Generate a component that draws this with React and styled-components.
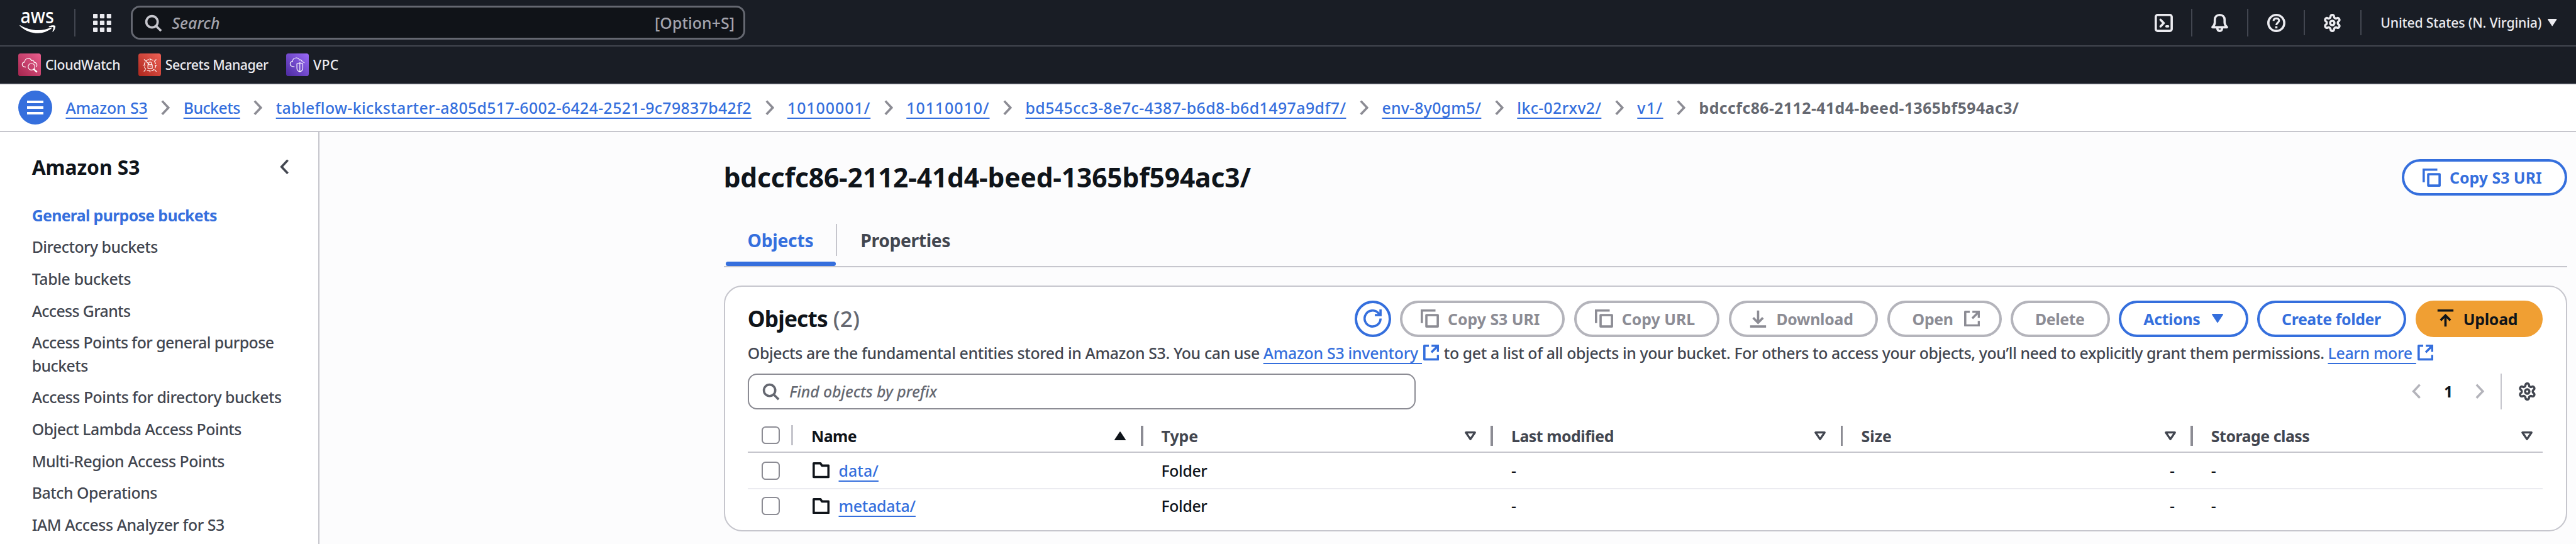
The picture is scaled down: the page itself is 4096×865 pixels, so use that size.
import React from "react";
import styled, { createGlobalStyle, css } from "styled-components";

const SCALE = 4096 / 4528;
const u = (n) => `${+(n * SCALE).toFixed(3)}px`;

const c = {
  blue: "#356fdd",
  ink: "#0f141a",
  text: "#424650",
  muted: "#656871",
  grey: "#8c8c94",
  border: "#c6c6cd",
  light: "#ebebf0",
  disabled: "#b4b4bb",
  navy: "#191d25",
  navyText: "#ebebf0",
};

const Global = createGlobalStyle`
  html, body { margin: 0; padding: 0; }
  *, *::before, *::after { box-sizing: border-box; }
  body {
    font-family: "Noto Sans", "Open Sans", sans-serif;
    font-weight: 500;
    color: ${c.text};
    overflow: hidden;
    -webkit-font-smoothing: antialiased;
  }
`;

/* ---------- shared text ---------- */

const tracked = css`
  letter-spacing: ${(p) => u(p.$ls || 0)};
  white-space: nowrap;
`;

const Text = styled.span`
  font-size: ${u(27.5)};
  line-height: ${u(40)};
  ${tracked}
`;

const Link = styled.a`
  font-size: ${u(27.5)};
  line-height: ${u(40)};
  color: ${c.blue};
  text-decoration: underline;
  text-decoration-thickness: 2px;
  text-underline-offset: ${u(6.5)};
  text-decoration-skip-ink: none;
  ${tracked}
`;

/* ---------- icons ---------- */

const Svg = styled.svg`
  display: block;
  flex: none;
  width: ${(p) => u(p.$w || 32)};
  height: ${(p) => u(p.$h || p.$w || 32)};
  fill: none;
  stroke: currentColor;
  stroke-width: ${(p) => p.$sw || 2};
  color: ${(p) => p.$color || "inherit"};
`;

const SearchIcon = ({ color }) => (
  <Svg viewBox="0 0 16 16" $color={color}>
    <circle cx="7" cy="7" r="5" />
    <path d="M10.6 10.6 15 15" />
  </Svg>
);
const CopyIcon = () => (
  <Svg viewBox="0 0 16 16">
    <path d="M1 12V1H13" />
    <path d="M5 5h10v10H5z" strokeLinejoin="round" />
  </Svg>
);
const RefreshIcon = () => (
  <Svg viewBox="0 0 16 16">
    <path d="M15 8a7 7 0 1 1-1.9-4.8L14.6 5" />
    <path d="M15 0v5H10" />
  </Svg>
);
const ExternalIcon = () => (
  <Svg viewBox="0 0 14 14" $w={28}>
    <path d="M5 1H1v12h12V9" strokeLinejoin="round" />
    <path d="M7.3 1H13v5.4M12.6 1.4 7.2 6.8" />
  </Svg>
);
const DownloadIcon = () => (
  <Svg viewBox="0 0 16 16">
    <path d="M8 1v10.6M3.7 7.4 8 11.7l4.3-4.3M1 15h14" />
  </Svg>
);
const UploadIcon = () => (
  <Svg viewBox="0 0 16 16">
    <path d="M1 1h14M8 15V5M3.7 9.6 8 5.3l4.3 4.3" />
  </Svg>
);
const Chevron = ({ left, color }) => (
  <Svg viewBox="0 0 16 27" $w={16} $h={27} $sw={4} $color={color}>
    <path d={left ? "M14 1.8 3 13.5 14 25.2" : "M2 1.8 13 13.5 2 25.2"} />
  </Svg>
);
const GearIcon = ({ color }) => (
  <Svg viewBox="0.6 0.6 22.8 22.8" $sw={2.75} $color={color} strokeLinejoin="round">
    <path d="M12.22 2h-.44a2 2 0 0 0-2 2v.18a2 2 0 0 1-1 1.73l-.43.25a2 2 0 0 1-2 0l-.15-.08a2 2 0 0 0-2.73.73l-.22.38a2 2 0 0 0 .73 2.73l.15.1a2 2 0 0 1 1 1.72v.51a2 2 0 0 1-1 1.74l-.15.09a2 2 0 0 0-.73 2.73l.22.38a2 2 0 0 0 2.73.73l.15-.08a2 2 0 0 1 2 0l.43.25a2 2 0 0 1 1 1.73V20a2 2 0 0 0 2 2h.44a2 2 0 0 0 2-2v-.18a2 2 0 0 1 1-1.73l.43-.25a2 2 0 0 1 2 0l.15.08a2 2 0 0 0 2.73-.73l.22-.39a2 2 0 0 0-.73-2.73l-.15-.08a2 2 0 0 1-1-1.74v-.5a2 2 0 0 1 1-1.74l.15-.09a2 2 0 0 0 .73-2.73l-.22-.38a2 2 0 0 0-2.73-.73l-.15.08a2 2 0 0 1-2 0l-.43-.25a2 2 0 0 1-1-1.73V4a2 2 0 0 0-2-2z" />
    <circle cx="12" cy="12" r="2.7" />
  </Svg>
);
const TerminalIcon = () => (
  <Svg viewBox="0 0 16 16" strokeLinecap="round" strokeLinejoin="round">
    <rect x="1" y="1" width="14" height="14" rx="1.6" />
    <path d="m5.2 5.2 2.8 2.9-2.8 2.9M10.3 11h1.6" />
  </Svg>
);
const BellIcon = () => (
  <Svg viewBox="0 0 16 16" strokeLinejoin="round">
    <path d="M1.6 11.8C3 10.4 3.7 9.4 3.7 7.4V5.2C3.7 2.6 5.5 1 8 1s4.3 1.6 4.3 4.2v2.2c0 2 .7 3 2.1 4.4z" />
    <path d="M5.9 12.6c0 1.6.8 2.4 2.1 2.4s2.1-.8 2.1-2.4" />
  </Svg>
);
const HelpIcon = () => (
  <Svg viewBox="0 0 16 16">
    <circle cx="8" cy="8" r="7" />
    <path d="M5.6 6.2C5.6 4.7 6.6 4 8 4s2.4.8 2.4 2.1C10.4 7.7 8 7.8 8 10" strokeWidth="1.7" />
    <path d="M7 11h2v1.8H7z" fill="currentColor" stroke="none" />
  </Svg>
);
const FolderIcon = () => (
  <Svg viewBox="0 0 30 28" $w={30} $h={28} $sw={4} $color={c.ink} strokeLinejoin="round">
    <path d="M2 2h12l2.6 4H28v20H2z" />
  </Svg>
);
const GridIcon = () => (
  <Svg viewBox="0 0 32 32">
    {[0, 12, 24].map((y) =>
      [0, 12, 24].map((x) => (
        <rect key={`${x}-${y}`} x={x} y={y} width="8" height="8" rx="1.2" fill="currentColor" stroke="none" />
      ))
    )}
  </Svg>
);
const Triangle = ({ up, hollow, w = 20, h = 16, color }) => (
  <Svg viewBox="0 0 20 16" $w={w} $h={h} $sw={hollow ? 3.6 : 2} $color={color} strokeLinejoin="round">
    {hollow ? (
      <path d="M2 1.9h16L10 13.6z" />
    ) : (
      <path fill="currentColor" d={up ? "M10 1.4 18.9 15H1.1z" : "M10 14.6 18.9 1H1.1z"} />
    )}
  </Svg>
);

const Logo = () => (
  <Svg viewBox="0 -20 64 80" $w={64} $h={80}>
    <text x="1.6" y="20.4" textLength="59" lengthAdjust="spacingAndGlyphs" fill="#fff" stroke="none" fontSize="36.5" fontWeight="500">
      aws
    </text>
    <path
      fill="#fff"
      stroke="none"
      d="M.4 25.2c-.4-.7.3-1.2 1-.8C10.500 29.800 21.500 33 32.500 33c8 0 16-1.600 22.600-4.700 1.300-.6 2.400.8 1.100 1.800C49.800 35.200 41.200 38.300 33 38.300 20.500 38.300 8.800 33.700.4 25.200z"
    />
    <path
      fill="#fff"
      stroke="none"
      d="M51.800 26.300c3.600-2.500 9.600-2.100 11-1.100 1 1-.2 7.300-3.800 10.400-.8.700-1.500.3-1.100-.6 1-2.400 2.300-6 1.600-6.900-.8-.9-4.600-.6-7-.3-.9.100-1.400-.8-.7-1.500z"
    />
  </Svg>
);

const cloud =
  "M13.4 24C8.500 24 7 21.600 7 19.200c0-2.200 1.600-3.800 4.400-4.200C11.400 11 14.300 8.700 18 8.700c2.500 0 4.400 1.500 5.300 4 2.200-1.200 4.600.1 4.700 3 3.200.5 4.900 2.300 4.900 4.700 0 1.500-.5 2.600-1.400 3.400";

const CloudWatchGlyph = () => (
  <>
    <path d={cloud} />
    <circle cx="23.300" cy="23.300" r="5.900" />
    <path d="m27.400 27.800 4.800 4.200" strokeWidth="2.800" strokeLinecap="round" />
  </>
);
const SecretsGlyph = () => (
  <>
    <circle cx="20.500" cy="20.700" r="10.200" strokeDasharray="5.600 2.400" />
    <path d="M20.500 8v4.500M20.500 29v4M8 20.700h4.500M28.700 20.700h4.300M10 10.400l7.500 7.300M31.500 10.500l-3.200 3.200M12.800 28.400l-3.200 3.200M28.300 28.400l3.500 3.600" />
    <path d="M16.800 19.800h7.600v6.600h-7.600zM18.300 19.600v-2.200c0-3 4.600-3 4.600 0v2.200M20.600 22v2.300" />
  </>
);
const VpcGlyph = () => (
  <>
    <path d="M14.700 23.400C8.500 23.500 7 20.600 7 18.200c0-2.200 1.600-3.800 4.400-4.200C11.400 10 14.300 7.700 18 7.700c2.500 0 4.400 1.500 5.300 4 2.200-1.200 4.600.1 4.700 3 1.900.3 3.300 1 4.100 2.100" />
    <path d="M24.100 16.500 29.300 18v8c0 3.400-2 5.200-5.200 6.400-3.200-1.200-5.200-3-5.200-6.400v-8zM24.100 17v15" />
  </>
);

/* ---------- page frame ---------- */

const Page = styled.div`
  display: flex;
  flex-direction: column;
  width: 4096px;
  height: 865px;
  overflow: hidden;
  background: #fcfcfd;
`;

const TopBar = styled.header`
  flex: none;
  display: flex;
  align-items: center;
  height: ${u(82)};
  padding: 0 ${u(31)} 0 ${u(34)};
  background: ${c.navy};
  border-bottom: 2px solid ${c.text};
  color: ${c.navyText};
`;

const BarDivider = styled.i`
  flex: none;
  width: 2px;
  height: ${(p) => u(p.$h || 48)};
  background: ${c.text};
`;

const AppsButton = styled.div`
  padding: 0 ${u(34)} 0 ${u(31.5)};
`;

const LogoSlot = styled.div`
  width: ${u(96)};
`;

const GlobalSearch = styled.div`
  display: flex;
  align-items: center;
  width: ${u(1080)};
  height: ${u(60)};
  padding: 0 ${u(15)} 0 ${u(20)};
  border: ${u(4)} solid ${c.muted};
  border-radius: ${u(16)};
  background: #101318;
`;

const Placeholder = styled(Text)`
  flex: 1;
  font-style: italic;
  color: ${(p) => p.$color};
  padding-left: ${u(17)};
`;

const Shortcut = styled(Text)`
  color: #a4a4ad;
`;

const Spacer = styled.div`
  flex: 1;
`;

const TopAction = styled.div`
  display: flex;
  justify-content: center;
  width: ${u(96.8)};
`;

const Region = styled.div`
  display: flex;
  align-items: center;
  gap: ${u(11)};
  width: ${u(346.5)};
  padding-left: ${u(34)};
`;

const SmallText = styled(Text)`
  font-size: ${u(23.5)};
`;

const Favorites = styled.nav`
  flex: none;
  display: flex;
  align-items: center;
  height: ${u(66)};
  padding-left: ${u(32)};
  gap: ${u(31.5)};
  background: ${c.navy};
  border-bottom: 2px solid ${c.text};
  color: ${c.navyText};
`;

const Favorite = styled.div`
  display: flex;
  align-items: center;
  gap: ${u(7.5)};
`;

const ServiceTile = styled.div`
  width: ${u(40)};
  height: ${u(40)};
  border-radius: ${u(4)};
  background: linear-gradient(45deg, ${(p) => p.$from}, ${(p) => p.$to});
  color: #fff;
`;

const Crumbs = styled.nav`
  flex: none;
  display: flex;
  align-items: center;
  height: ${u(84)};
  padding-left: ${u(32)};
  background: #fff;
  border-bottom: 2px solid ${c.border};
`;

const MenuButton = styled.div`
  display: flex;
  flex-direction: column;
  align-items: center;
  justify-content: center;
  gap: ${u(6)};
  width: ${u(60)};
  height: ${u(60)};
  margin-right: ${u(23.5)};
  border-radius: 50%;
  background: ${c.blue};
`;

const MenuLine = styled.i`
  width: ${u(28)};
  height: ${u(4)};
  background: #fff;
`;

const CrumbGap = styled.div`
  display: flex;
  width: ${u(63)};
  padding-left: ${u(24)};
`;

const CurrentCrumb = styled(Text)`
  font-weight: 700;
  color: ${c.muted};
`;

const Body = styled.div`
  flex: 1;
  display: flex;
  min-height: 0;
`;

/* ---------- side navigation ---------- */

const Side = styled.aside`
  flex: none;
  width: ${u(562)};
  padding: ${u(31)} ${u(51.5)} 0 ${u(56)};
  background: #fff;
  border-right: 2px solid ${c.border};
`;

const SideHead = styled.div`
  display: flex;
  align-items: center;
  justify-content: space-between;
  height: ${u(60)};
  margin-bottom: ${u(35)};
`;

const SideTitle = styled.h2`
  margin: 0;
  padding-top: ${u(2)};
  font-size: ${u(35.2)};
  line-height: ${u(44)};
  font-weight: 700;
  color: ${c.ink};
  ${tracked}
`;

const SideList = styled.ul`
  display: flex;
  flex-direction: column;
  gap: ${u(16)};
  margin: 0;
  padding: 0;
  list-style: none;
`;

const SideItem = styled.li`
  width: ${u(450)};
  font-size: ${u(27.5)};
  line-height: ${u(40)};
  letter-spacing: ${(p) => u(p.$ls || 0)};
  font-weight: ${(p) => (p.$active ? 700 : 500)};
  color: ${(p) => (p.$active ? c.blue : c.text)};
`;

/* ---------- main ---------- */

const Main = styled.main`
  flex: 1;
  padding: ${u(48)} ${u(16)} 0 ${u(710)};
`;

const TitleRow = styled.div`
  display: flex;
  align-items: center;
  justify-content: space-between;
  height: ${u(64)};
`;

const Title = styled.h1`
  margin: 0;
  font-size: ${u(47)};
  line-height: ${u(64)};
  font-weight: 700;
  color: ${c.ink};
  ${tracked}
`;

const tones = {
  normal: css`
    color: ${c.blue};
    border-color: ${c.blue};
  `,
  disabled: css`
    color: ${c.grey};
    border-color: ${c.disabled};
  `,
  primary: css`
    color: ${c.ink};
    border-color: #f09f33;
    background: #f09f33;
  `,
};

const Button = styled.button`
  display: flex;
  align-items: center;
  flex: none;
  gap: ${(p) => u(p.$gap ?? 15.5)};
  width: ${(p) => u(p.$w)};
  height: ${u(64)};
  padding: 0 0 0 ${(p) => u(p.$pad ?? 38.5)};
  border: 4px solid;
  border-radius: ${u(40)};
  background: #fff;
  font-family: inherit;
  font-size: ${u(27.5)};
  font-weight: 700;
  ${tracked}
  ${(p) => tones[p.$tone || "normal"]}
`;

const TabList = styled.div`
  display: flex;
  align-items: flex-start;
  height: ${u(94)};
  margin-top: ${u(32)};
  padding-left: ${u(4)};
  border-bottom: 2px solid ${c.border};
`;

const Tab = styled.div`
  display: flex;
  flex-direction: column;
  width: ${(p) => u(p.$w)};
  height: ${u(92)};
  color: ${(p) => (p.$active ? c.blue : c.text)};
`;

const TabLabel = styled.span`
  display: flex;
  align-items: center;
  flex: 1;
  padding: ${u(8)} 0 0 ${(p) => u(p.$pad)};
  font-size: ${u(31.3)};
  font-weight: 700;
  ${tracked}
`;

const TabBar = styled.i`
  height: ${u(8)};
  border-radius: ${u(4)};
  background: ${(p) => (p.$active ? c.blue : "transparent")};
`;

const TabDivider = styled.i`
  width: 2px;
  height: ${u(56)};
  margin-top: ${u(18)};
  background: ${c.border};
`;

const Card = styled.section`
  height: ${u(432)};
  margin-top: ${u(32)};
  padding: ${u(24)} ${u(40)} 0;
  border: 2px solid ${c.border};
  border-radius: ${u(32)};
  background: #fff;
`;

const CardHead = styled.div`
  display: flex;
  align-items: center;
  justify-content: space-between;
  height: ${u(64)};
`;

const CardTitle = styled.h2`
  display: flex;
  gap: ${u(10)};
  margin: 0;
  font-size: ${u(39)};
  line-height: ${u(48)};
  font-weight: 700;
  color: ${c.ink};
  ${tracked}
`;

const Counter = styled.span`
  font-weight: 500;
  color: ${c.muted};
  letter-spacing: 0;
`;

const ButtonRow = styled.div`
  display: flex;
  gap: ${u(16)};
`;

const Description = styled.p`
  display: flex;
  align-items: center;
  height: ${u(40)};
  margin: ${u(8)} 0 0;
`;

const InlineIcon = styled.span`
  display: flex;
  padding: 0 ${(p) => u(p.$after || 0)} 0 ${u(2)};
  color: ${c.blue};
`;

const WordGap = styled.i`
  width: ${u(6.5)};
`;

const Tools = styled.div`
  display: flex;
  align-items: center;
  height: ${u(64)};
  margin-top: ${u(16)};
`;

const Filter = styled.div`
  display: flex;
  align-items: center;
  width: ${u(1174)};
  height: ${u(64)};
  padding-left: ${u(22)};
  border: 2px solid ${c.grey};
  border-radius: ${u(16)};
`;

const Pager = styled.div`
  display: flex;
  align-items: center;
  justify-content: space-between;
  width: ${u(128)};
  margin-right: ${u(28)};
`;

const PageNumber = styled(Text)`
  font-weight: 700;
  color: ${c.ink};
`;

const ToolDivider = styled.i`
  width: 2px;
  height: ${u(64)};
  margin-right: ${u(28)};
  background: ${c.border};
`;

const GearSlot = styled.div`
  width: ${u(44)};
`;

/* ---------- table ---------- */

const Table = styled.div`
  display: flex;
  flex-direction: column;
  margin-top: ${u(16)};
`;

const Row = styled.div`
  display: grid;
  grid-template-columns: ${u(80)} repeat(5, 1fr);
  align-items: center;
  height: ${(p) => u(p.$h)};
  border-bottom: ${(p) => (p.$line ? `2px solid ${p.$line}` : "none")};
`;

const SelectCell = styled.div`
  display: flex;
  align-items: center;
  justify-content: space-between;
  padding-left: ${u(25)};
`;

const Checkbox = styled.i`
  width: ${u(32)};
  height: ${u(32)};
  border: 2px solid ${c.grey};
  border-radius: ${u(7)};
  background: #fff;
`;

const Resizer = styled.i`
  width: ${u(4)};
  height: ${u(36)};
  background: ${(p) => p.$color || c.grey};
`;

const HeadCell = styled.div`
  display: flex;
  align-items: center;
  padding: ${u(2)} 0 0 ${u(32)};
  color: ${(p) => (p.$sorted ? c.ink : c.text)};
`;

const HeadLabel = styled(Text)`
  flex: 1;
  font-weight: 700;
`;

const SortSlot = styled.div`
  display: flex;
  padding-right: ${(p) => u(p.$last ? 18 : 26)};
`;

const Cell = styled.div`
  display: flex;
  align-items: center;
  justify-content: ${(p) => (p.$end ? "flex-end" : "flex-start")};
  padding: 0 ${u(32)};
  color: ${c.ink};
`;

const NameCell = styled(Cell)`
  gap: ${u(16)};
  padding-left: ${u(34)};
`;

/* ---------- data ---------- */

const favorites = [
  { name: "CloudWatch", ls: -0.33, from: "#a5254e", to: "#ea5e8d", Glyph: CloudWatchGlyph },
  { name: "Secrets Manager", ls: -0.5, from: "#ad271d", to: "#ee6156", Glyph: SecretsGlyph },
  { name: "VPC", ls: 0.5, from: "#4b2a9f", to: "#9a6af8", Glyph: VpcGlyph },
];

const crumbs = [
  { name: "Amazon S3", ls: -0.1 },
  { name: "Buckets", ls: -0.6 },
  { name: "tableflow-kickstarter-a805d517-6002-6424-2521-9c79837b42f2", ls: 0.39 },
  { name: "10100001/", ls: 1.1 },
  { name: "10110010/", ls: 1.1 },
  { name: "bd545cc3-8e7c-4387-b6d8-b6d1497a9df7/", ls: 0.49 },
  { name: "env-8y0gm5/", ls: 0.27 },
  { name: "lkc-02rxv2/", ls: 0.39 },
  { name: "v1/", ls: 1.6 },
];

const sideItems = [
  { name: "General purpose buckets", ls: -0.73, active: true },
  { name: "Directory buckets", ls: -0.58 },
  { name: "Table buckets", ls: -0.38 },
  { name: "Access Grants", ls: -0.71 },
  { name: "Access Points for general purpose buckets", ls: -0.6 },
  { name: "Access Points for directory buckets", ls: -0.53 },
  { name: "Object Lambda Access Points", ls: -0.54 },
  { name: "Multi-Region Access Points", ls: -0.52 },
  { name: "Batch Operations", ls: -0.52 },
  { name: "IAM Access Analyzer for S3", ls: -0.5 },
];

const columns = [
  { name: "Name", ls: -0.6, sorted: true },
  { name: "Type", ls: 0 },
  { name: "Last modified", ls: -0.52 },
  { name: "Size", ls: 0.05 },
  { name: "Storage class", ls: -0.52 },
];

const rows = [
  { name: "data/", ls: 0.1, h: 64, line: c.light },
  { name: "metadata/", ls: -0.26, h: 58 },
];

export default function App() {
  return (
    <Page>
      <Global />
      <TopBar>
        <LogoSlot>
          <Logo />
        </LogoSlot>
        <BarDivider />
        <AppsButton>
          <GridIcon />
        </AppsButton>
        <GlobalSearch>
          <SearchIcon color="#c6c6cd" />
          <Placeholder $ls={0.2} $color="#a4a4ad">Search</Placeholder>
          <Shortcut $ls={0.1}>[Option+S]</Shortcut>
        </GlobalSearch>
        <Spacer />
        <TopAction><TerminalIcon /></TopAction>
        <BarDivider />
        <TopAction><BellIcon /></TopAction>
        <BarDivider />
        <TopAction><HelpIcon /></TopAction>
        <BarDivider $h={44} />
        <TopAction><GearIcon /></TopAction>
        <BarDivider $h={44} />
        <Region>
          <SmallText $ls={-0.2}>United States (N. Virginia)</SmallText>
          <Triangle w={16} h={13} />
        </Region>
      </TopBar>

      <Favorites>
        {favorites.map(({ name, ls, from, to, Glyph }) => (
          <Favorite key={name}>
            <ServiceTile $from={from} $to={to}>
              <Svg viewBox="0 0 40 40" $w={40} $sw={1.3} strokeLinejoin="round">
                <Glyph />
              </Svg>
            </ServiceTile>
            <SmallText $ls={ls}>{name}</SmallText>
          </Favorite>
        ))}
      </Favorites>

      <Crumbs>
        <MenuButton>
          <MenuLine />
          <MenuLine />
          <MenuLine />
        </MenuButton>
        {crumbs.map(({ name, ls }) => (
          <React.Fragment key={name}>
            <Link $ls={ls}>{name}</Link>
            <CrumbGap>
              <Chevron color={c.grey} />
            </CrumbGap>
          </React.Fragment>
        ))}
        <CurrentCrumb $ls={0.47}>bdccfc86-2112-41d4-beed-1365bf594ac3/</CurrentCrumb>
      </Crumbs>

      <Body>
        <Side>
          <SideHead>
            <SideTitle $ls={-0.1}>Amazon S3</SideTitle>
            <Chevron left color={c.text} />
          </SideHead>
          <SideList>
            {sideItems.map(({ name, ls, active }) => (
              <SideItem key={name} $ls={ls} $active={active}>{name}</SideItem>
            ))}
          </SideList>
        </Side>

        <Main>
          <TitleRow>
            <Title $ls={-0.15}>bdccfc86-2112-41d4-beed-1365bf594ac3/</Title>
            <Button $w={290} $pad={32} $ls={0}>
              <CopyIcon />
              Copy S3 URI
            </Button>
          </TitleRow>

          <TabList>
            <Tab $w={193} $active>
              <TabLabel $pad={38} $ls={-0.3}>Objects</TabLabel>
              <TabBar $active />
            </Tab>
            <TabDivider />
            <Tab $w={240}>
              <TabLabel $pad={41.5} $ls={-0.42}>Properties</TabLabel>
              <TabBar />
            </Tab>
          </TabList>

          <Card>
            <CardHead>
              <CardTitle $ls={-0.95}>
                Objects <Counter>(2)</Counter>
              </CardTitle>
              <ButtonRow>
                <Button $w={64} $pad={11.6}><RefreshIcon /></Button>
                <Button $w={290} $pad={32} $tone="disabled"><CopyIcon />Copy S3 URI</Button>
                <Button $w={255.5} $pad={32} $tone="disabled"><CopyIcon />Copy URL</Button>
                <Button $w={263} $pad={32} $ls={-0.28} $tone="disabled"><DownloadIcon />Download</Button>
                <Button $w={201} $pad={39.5} $gap={19} $ls={-0.35} $tone="disabled">Open<ExternalIcon /></Button>
                <Button $w={174.5} $ls={-0.45} $tone="disabled">Delete</Button>
                <Button $w={227} $gap={21} $ls={-0.37}>Actions<Triangle /></Button>
                <Button $w={262} $ls={-0.42}>Create folder</Button>
                <Button $w={224} $pad={32} $ls={-0.26} $tone="primary"><UploadIcon />Upload</Button>
              </ButtonRow>
            </CardHead>

            <Description>
              <Text $ls={-0.4}>Objects are the fundamental entities stored in Amazon S3. You can use</Text>
              <WordGap />
              <Link $ls={-0.29}>{"Amazon S3 inventory\u00a0"}</Link>
              <InlineIcon $after={8.5}><ExternalIcon /></InlineIcon>
              <Text $ls={-0.435}>
                to get a list of all objects in your bucket. For others to access your objects, you’ll need to explicitly grant them permissions.
              </Text>
              <WordGap />
              <Link $ls={-0.35}>{"Learn more\u00a0"}</Link>
              <InlineIcon><ExternalIcon /></InlineIcon>
            </Description>

            <Tools>
              <Filter>
                <SearchIcon color={c.muted} />
                <Placeholder $ls={-0.13} $color={c.muted}>Find objects by prefix</Placeholder>
              </Filter>
              <Spacer />
              <Pager>
                <Chevron left color={c.disabled} />
                <PageNumber>1</PageNumber>
                <Chevron color={c.disabled} />
              </Pager>
              <ToolDivider />
              <GearSlot>
                <GearIcon color={c.text} />
              </GearSlot>
            </Tools>

            <Table>
              <Row $h={60} $line={c.border}>
                <SelectCell>
                  <Checkbox />
                  <Resizer $color={c.border} />
                </SelectCell>
                {columns.map(({ name, ls, sorted }, i) => {
                  const last = i === columns.length - 1;
                  return (
                    <HeadCell key={name} $sorted={sorted}>
                      <HeadLabel $ls={ls}>{name}</HeadLabel>
                      <SortSlot $last={last}>
                        <Triangle up={sorted} hollow={!sorted} />
                      </SortSlot>
                      {!last && <Resizer />}
                    </HeadCell>
                  );
                })}
              </Row>
              {rows.map(({ name, ls, h, line }) => (
                <Row key={name} $h={h} $line={line}>
                  <SelectCell>
                    <Checkbox />
                  </SelectCell>
                  <NameCell>
                    <FolderIcon />
                    <Link $ls={ls}>{name}</Link>
                  </NameCell>
                  <Cell><Text $ls={-0.42}>Folder</Text></Cell>
                  <Cell><Text>-</Text></Cell>
                  <Cell $end><Text>-</Text></Cell>
                  <Cell><Text>-</Text></Cell>
                </Row>
              ))}
            </Table>
          </Card>
        </Main>
      </Body>
    </Page>
  );
}
